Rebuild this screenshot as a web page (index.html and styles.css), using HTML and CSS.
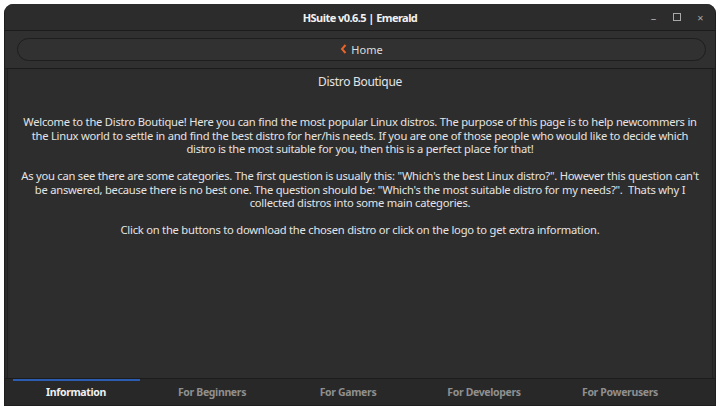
FILE: index.html
```html
<!DOCTYPE html>
<html>
<head>
<meta charset="utf-8">
<link rel="stylesheet" href="styles.css">
</head>
<body>
<div class="window">
  <div class="titlebar">
    <div class="title">HSuite v0.6.5 | Emerald</div>
    <div class="controls">
      <span class="ctl">&ndash;</span>
      <span class="ctl box"></span>
      <span class="ctl">&times;</span>
    </div>
  </div>
  <div class="header">
    <div class="homebtn"><span class="chev"><svg width="7" height="10" viewBox="0 0 7 10"><path d="M5.5 1 L2 5 L5.5 9" fill="none" stroke="#e8632a" stroke-width="2"/></svg></span>Home</div>
  </div>
  <div class="content">
    <h1 class="heading">Distro Boutique</h1>
    <p class="para">Welcome to the Distro Boutique! Here you can find the most popular Linux distros. The purpose of this page is to help newcommers in<br>the Linux world to settle in and find the best distro for her/his needs. If you are one of those people who would like to decide which<br>distro is the most suitable for you, then this is a perfect place for that!</p>
    <p class="para">As you can see there are some categories. The first question is usually this: "Which's the best Linux distro?". However this question can't<br>be answered, because there is no best one. The question should be: "Which's the most suitable distro for my needs?".&nbsp; Thats why I<br>collected distros into some main categories.</p>
    <p class="para">Click on the buttons to download the chosen distro or click on the logo to get extra information.</p>
  </div>
  <div class="tabs">
    <div class="tab active">Information</div>
    <div class="tab">For Beginners</div>
    <div class="tab">For Gamers</div>
    <div class="tab">For Developers</div>
    <div class="tab">For Powerusers</div>
  </div>
</div>
</body>
</html>
```
FILE: styles.css
```css
html, body {
  margin: 0;
  padding: 0;
  background: #ffffff;
}
body {
  width: 720px;
  height: 413px;
  overflow: hidden;
  font-family: "Noto Sans", "DejaVu Sans", sans-serif;
}
.window {
  margin: 4px 4px 0 4px;
  height: 402px;
  background: #2b2b2b;
  border-radius: 9px 9px 0 0;
  border: 1px solid #1e1e1e;
  border-top: none;
  display: flex;
  flex-direction: column;
  box-sizing: border-box;
  overflow: hidden;
}
.titlebar {
  height: 26px;
  flex: none;
  background: #2c2c2c;
  border-bottom: 1px solid #1c1c1c;
  display: flex;
  align-items: center;
  justify-content: center;
  position: relative;
}
.title {
  color: #f2f2f2;
  font-weight: bold;
  font-size: 11px;
  letter-spacing: -0.55px;
}
.controls {
  position: absolute;
  right: 10px;
  top: 0;
  height: 26px;
  display: flex;
  align-items: center;
  gap: 14px;
}
.ctl {
  color: #a8a8a8;
  font-size: 11px;
  width: 9px;
  text-align: center;
}
.ctl.box {
  width: 6px;
  height: 6px;
  border: 1px solid #a8a8a8;
  margin: 0 1px;
}
.header {
  flex: none;
  height: 38px;
  background: #303030;
  border-bottom: 1px solid #1c1c1c;
  padding: 7px 9px 0 12px;
  box-sizing: border-box;
}
.homebtn {
  height: 23px;
  border: 1px solid #1e1e1e;
  border-radius: 12px;
  background: #313131;
  box-sizing: border-box;
  display: flex;
  align-items: center;
  justify-content: center;
  color: #dcdcdc;
  font-size: 11px;
  padding-bottom: 1px;
}
.chev {
  display: inline-flex;
  margin-right: 4px;
}
.content {
  flex: 1;
  background: #2d2d2d;
  margin: 0 2px 0 2px;
  border-left: 1px solid #222;
  border-right: 1px solid #222;
  padding-top: 5px;
  text-align: center;
  color: #e4e4e4;
}
.heading {
  margin: 0;
  font-size: 12px;
  font-weight: normal;
  line-height: 16px;
  letter-spacing: -0.3px;
}
.para {
  margin: 25px 0 0 0;
  font-size: 11.2px;
  line-height: 13.5px;
  letter-spacing: -0.235px;
}
.para + .para {
  margin-top: 13.5px;
}
.tabs {
  flex: none;
  height: 26px;
  background: #282828;
  border-top: 1px solid #1c1c1c;
  display: flex;
  padding-left: 3px;
}
.tab {
  width: 136px;
  text-align: center;
  font-size: 10.5px;
  font-weight: bold;
  color: #8f8f8f;
  line-height: 24px;
  padding-top: 1px;
  letter-spacing: -0.35px;
  box-sizing: border-box;
  position: relative;
}
.tab.active {
  color: #f0f0f0;
}
.tab.active::before {
  content: "";
  position: absolute;
  left: 5px;
  right: 4px;
  top: 0;
  height: 2px;
  background: #2a5db0;
}
```
